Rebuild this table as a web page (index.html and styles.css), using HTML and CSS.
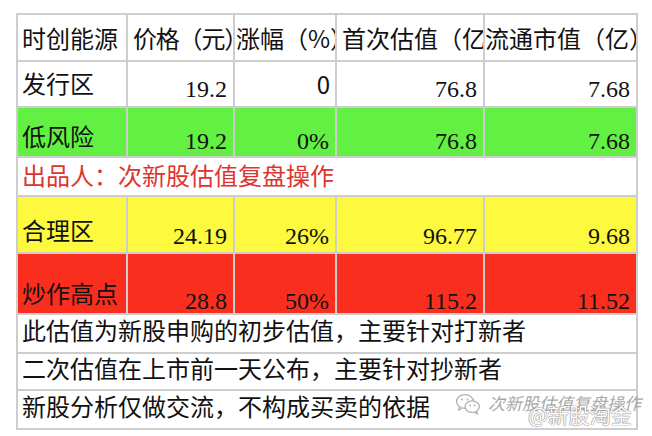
FILE: index.html
```html
<!DOCTYPE html>
<html lang="zh">
<head>
<meta charset="utf-8">
<title>时创能源</title>
<link rel="stylesheet" href="styles.css">
</head>
<body>
<div class="page">
  <div class="sheet">
    <div class="c h r-head pl4">时创能源</div>
    <div class="c h r-head pl5 tight">价格<span class="p">（</span>元<span class="p">）</span></div>
    <div class="c h r-head pl1">涨幅<span class="p">（</span>%<span class="p">）</span></div>
    <div class="c h r-head pl5">首次估值<span class="p">（</span>亿<span class="p">）</span></div>
    <div class="c h r-head pl0">流通市值<span class="p">（</span>亿<span class="p">）</span></div>

    <div class="c t r-issue">发行区</div>
    <div class="c n r-issue">19.2</div>
    <div class="c n s r-issue">0</div>
    <div class="c n r-issue">76.8</div>
    <div class="c n r-issue">7.68</div>

    <div class="c t green r-low">低风险</div>
    <div class="c n green r-low">19.2</div>
    <div class="c n green r-low">0%</div>
    <div class="c n green r-low">76.8</div>
    <div class="c n green r-low">7.68</div>

    <div class="c t span note">出品人：次新股估值复盘操作</div>

    <div class="c t yellow r-fair">合理区</div>
    <div class="c n yellow r-fair">24.19</div>
    <div class="c n yellow r-fair">26%</div>
    <div class="c n yellow r-fair">96.77</div>
    <div class="c n yellow r-fair">9.68</div>

    <div class="c t red r-hot">炒作高点</div>
    <div class="c n red r-hot">28.8</div>
    <div class="c n red r-hot">50%</div>
    <div class="c n red r-hot">115.2</div>
    <div class="c n red r-hot">11.52</div>

    <div class="c t span r-l1">此估值为新股申购的初步估值，主要针对打新者</div>
    <div class="c t span r-l2">二次估值在上市前一天公布，主要针对抄新者</div>
    <div class="c t span r-l3">新股分析仅做交流，不构成买卖的依据</div>
  </div>

  <div class="wm">
    <svg class="wm-icon" width="26" height="22" viewBox="0 0 26 22">
      <ellipse cx="10" cy="8.5" rx="8.5" ry="6.8" fill="#fff" stroke="#b0b0b0" stroke-width="1.3"/>
      <path d="M4.5 14 L3.6 17.2 L7.2 15.2" fill="#fff" stroke="#b0b0b0" stroke-width="1.3" stroke-linejoin="round"/>
      <ellipse cx="17.2" cy="13.6" rx="7.2" ry="5.8" fill="#fff" stroke="#b0b0b0" stroke-width="1.3"/>
      <path d="M21.5 18.4 L22.6 20.8 L19.6 19.3" fill="#fff" stroke="#b0b0b0" stroke-width="1.3" stroke-linejoin="round"/>
      <circle cx="7" cy="6.5" r="1" fill="#b0b0b0"/>
      <circle cx="12.5" cy="6.5" r="1" fill="#b0b0b0"/>
      <circle cx="15" cy="12.4" r="0.9" fill="#b0b0b0"/>
      <circle cx="19.6" cy="12.4" r="0.9" fill="#b0b0b0"/>
    </svg>
    <span class="wm-text">次新股估值复盘操作</span>
    <span class="wm-brand">@新股淘金</span>
  </div>
</div>
</body>
</html>
```
FILE: styles.css
```css
html, body {
  margin: 0;
  padding: 0;
  background: #fff;
}

.page {
  position: relative;
  width: 652px;
  height: 436px;
  overflow: hidden;
  padding: 13px 0 0 16px;
  box-sizing: border-box;
}

.sheet {
  display: grid;
  grid-template-columns: 108px 105px 100px 146px 151px;
  grid-template-rows: 45px 44px 48px 37px 55px 59px 37px 35px 37px;
  gap: 2px;
  padding: 2px;
  background: #cdcdcd;
  width: max-content;
}

.c {
  display: flex;
  align-items: flex-end;
  overflow: hidden;
  white-space: nowrap;
  background: #fff;
  color: #111;
  font-family: "Noto Sans CJK SC", "Noto Sans", sans-serif;
  font-size: 24px;
  line-height: 24px;
}

.p {
  font-family: "Noto Sans CJK JP", "Noto Sans CJK SC", sans-serif;
}

.tight {
  letter-spacing: -1.2px;
}

.t {
  padding-left: 4px;
}

.n {
  justify-content: flex-end;
  padding-right: 6px;
  font-family: "Liberation Serif", "Times New Roman", serif;
}

.n.s {
  font-family: "Noto Sans CJK SC", "Noto Sans", sans-serif;
  padding-right: 5px;
}

.span {
  grid-column: 1 / -1;
}

.pl0 { padding-left: 0; }
.pl1 { padding-left: 1px; }
.pl4 { padding-left: 4px; }
.pl5 { padding-left: 5px; }

.green { background: #62f042; }
.yellow { background: #fcf93e; }
.red { background: #fa2e1f; }

.note {
  color: #dc3530;
}

/* vertical placement per row */
.r-head { padding-bottom: 10px; }
.t.r-issue { padding-bottom: 11px; }
.n.r-issue { padding-bottom: 5px; }
.n.s.r-issue { padding-bottom: 10px; }
.t.r-low { padding-bottom: 8px; }
.n.r-low { padding-bottom: 3px; }
.note { padding-bottom: 8px; }
.t.r-fair { padding-bottom: 10px; }
.n.r-fair { padding-bottom: 4px; }
.t.r-hot { padding-bottom: 8px; }
.n.r-hot { padding-bottom: 0; }
.r-l1 { padding-bottom: 10px; }
.r-l2 { padding-bottom: 9px; }
.r-l3 { padding-bottom: 10px; }

/* watermark overlay */
.wm {
  position: absolute;
  left: 455px;
  top: 393px;
  display: flex;
  align-items: flex-start;
  gap: 7px;
}

.wm-icon {
  display: block;
}

.wm-text {
  font-family: "Noto Sans CJK SC", sans-serif;
  font-size: 17px;
  line-height: 20px;
  color: #a8a8a8;
  font-style: italic;
}

.wm-brand {
  position: absolute;
  left: 73px;
  top: 9px;
  font-family: "Noto Sans CJK SC", sans-serif;
  font-size: 21px;
  line-height: 24px;
  color: #fff;
  text-shadow: 0 0 1px #888, 0 0 1px #888, 0 0 1px #888;
  white-space: nowrap;
}
```
